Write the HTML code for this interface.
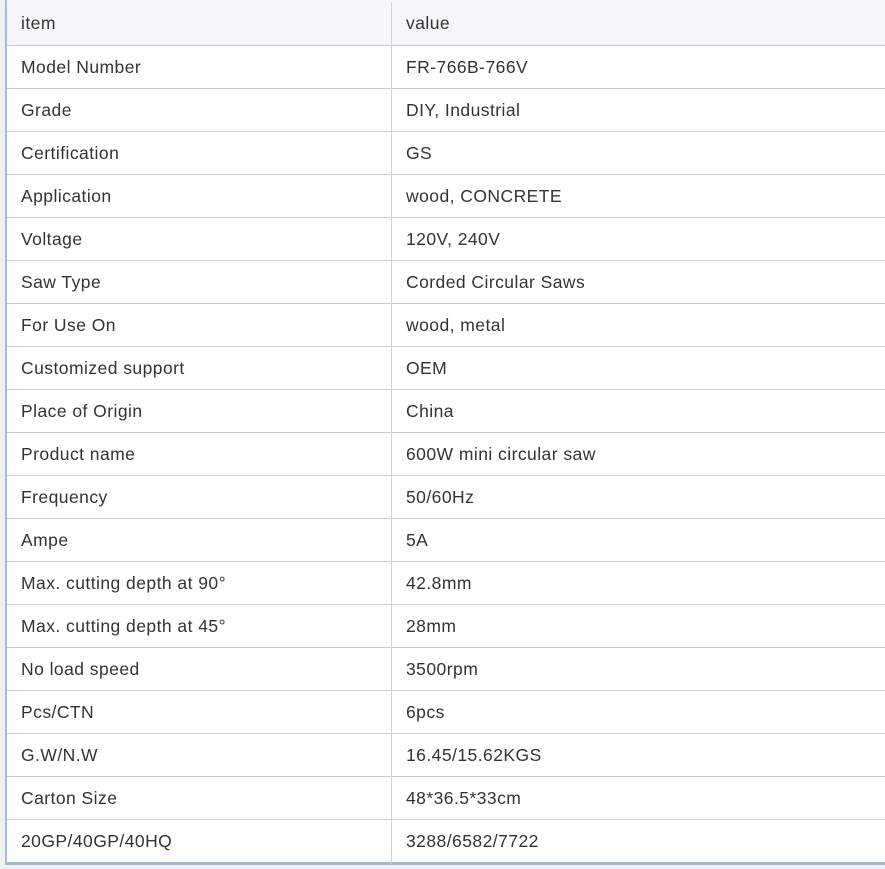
<!DOCTYPE html>
<html><head><style>
html,body{margin:0;padding:0;width:885px;height:869px;overflow:hidden;background:#eef1f4;}
.wrap{position:absolute;left:5px;top:0;width:890px;height:865px;border-left:2px solid #9fbde0;border-top:2px solid #a9c5e6;border-bottom:3px solid #a2b9d0;box-sizing:border-box;background:#fff;}
.row{position:absolute;left:0;width:890px;height:43px;border-top:1px solid #cccccc;box-sizing:border-box;font-family:"Liberation Sans",sans-serif;font-size:17.5px;letter-spacing:0.45px;color:#333;}
.row span{position:absolute;top:11px;}
.a{left:14px}.b{left:399px}
.div{position:absolute;left:384px;top:0;width:1px;height:862px;background:#d4d4d4;}
</style></head><body>
<div class="wrap">
<div class="row" style="top:-2px;height:46px;border-top:none;background:#f5f6f7"><span class="a" style="top:13px">item</span><span class="b" style="top:13px">value</span></div>
<div class="row" style="top:43px"><span class="a">Model Number</span><span class="b">FR-766B-766V</span></div>
<div class="row" style="top:86px"><span class="a">Grade</span><span class="b">DIY, Industrial</span></div>
<div class="row" style="top:129px"><span class="a">Certification</span><span class="b">GS</span></div>
<div class="row" style="top:172px"><span class="a">Application</span><span class="b">wood, CONCRETE</span></div>
<div class="row" style="top:215px"><span class="a">Voltage</span><span class="b">120V, 240V</span></div>
<div class="row" style="top:258px"><span class="a">Saw Type</span><span class="b">Corded Circular Saws</span></div>
<div class="row" style="top:301px"><span class="a">For Use On</span><span class="b">wood, metal</span></div>
<div class="row" style="top:344px"><span class="a">Customized support</span><span class="b">OEM</span></div>
<div class="row" style="top:387px"><span class="a">Place of Origin</span><span class="b">China</span></div>
<div class="row" style="top:430px"><span class="a">Product name</span><span class="b">600W mini circular saw</span></div>
<div class="row" style="top:473px"><span class="a">Frequency</span><span class="b">50/60Hz</span></div>
<div class="row" style="top:516px"><span class="a">Ampe</span><span class="b">5A</span></div>
<div class="row" style="top:559px"><span class="a">Max. cutting depth at 90°</span><span class="b">42.8mm</span></div>
<div class="row" style="top:602px"><span class="a">Max. cutting depth at 45°</span><span class="b">28mm</span></div>
<div class="row" style="top:645px"><span class="a">No load speed</span><span class="b">3500rpm</span></div>
<div class="row" style="top:688px"><span class="a">Pcs/CTN</span><span class="b">6pcs</span></div>
<div class="row" style="top:731px"><span class="a">G.W/N.W</span><span class="b">16.45/15.62KGS</span></div>
<div class="row" style="top:774px"><span class="a">Carton Size</span><span class="b">48*36.5*33cm</span></div>
<div class="row" style="top:817px"><span class="a">20GP/40GP/40HQ</span><span class="b">3288/6582/7722</span></div>
<div class="div"></div>
</div>
</body></html>
